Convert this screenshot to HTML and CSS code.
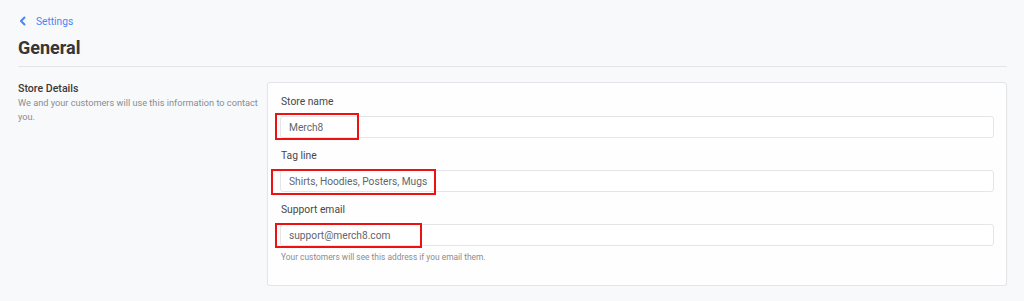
FILE: index.html
```html
<!DOCTYPE html>
<html lang="en">
  <head>
    <meta charset="UTF-8" />
    <meta name="viewport" content="width=device-width, initial-scale=1.0" />
    <title>General settings</title>
    <link rel="stylesheet" href="styles.css">
  </head>
  <body>
    <header class="page-header">
      <a class="back-link" href="#">
        <svg class="back-icon" viewBox="0 0 8 10" width="8" height="10">
          <path d="M 5.5,1.5 L 2,5 L 5.5,8.5" fill="none" stroke="currentColor" stroke-width="2" stroke-linecap="round" stroke-linejoin="round" />
        </svg>
        <span>Settings</span>
      </a>
      <h1 class="page-title">General</h1>
    </header>

    <section class="settings-section">
      <div class="section-info">
        <h2 class="section-title">Store Details</h2>
        <p class="section-desc">We and your customers will use this information to contact you.</p>
      </div>

      <div class="card">
        <div class="field">
          <label class="field-label" for="storeName">Store name</label>
          <div class="input-wrap">
            <input class="field-input" id="storeName" type="text" value="Merch8" />
            <span class="highlight highlight-name"></span>
          </div>
        </div>
        <div class="field">
          <label class="field-label" for="tagLine">Tag line</label>
          <div class="input-wrap">
            <input class="field-input" id="tagLine" type="text" value="Shirts, Hoodies, Posters, Mugs" />
            <span class="highlight highlight-tag"></span>
          </div>
        </div>
        <div class="field">
          <label class="field-label" for="supportEmail">Support email</label>
          <div class="input-wrap">
            <input class="field-input" id="supportEmail" type="email" value="support@merch8.com" />
            <span class="highlight highlight-email"></span>
          </div>
          <p class="field-help">Your customers will see this address if you email them.</p>
        </div>
      </div>
    </section>
  </body>
</html>
```

FILE: styles.css
```css
:root {
  --bg-color: #f8f9fb;
  --card-bg: #fefefe;
  --text-color: #333333;
  --muted-color: #8a8d91;
  --link-color: #4a86f0;
  --border-color: #e3e5e8;
  --highlight-color: #ee1111;
}
html,
body {
  margin: 0;
  padding: 0;
  background: var(--bg-color);
  color: var(--text-color);
  font-family: Roboto, "Liberation Sans", sans-serif;
}
body {
  padding: 14px 17px 0 18px;
}

.page-header {
  border-bottom: 1px solid var(--border-color);
  padding-bottom: 4px;
}
.back-link {
  display: flex;
  align-items: center;
  gap: 9px;
  height: 14px;
  padding-left: 1px;
  color: var(--link-color);
  font-size: 10.2px;
  text-decoration: none;
}
.back-icon {
  display: block;
}
.page-title {
  margin: 6px 0 0;
  font-size: 18px;
  line-height: 28px;
  font-weight: 700;
  color: #363636;
}

.settings-section {
  display: flex;
  gap: 9px;
  margin-top: 15px;
}
.section-info {
  width: 240px;
  flex-shrink: 0;
}
.section-title {
  margin: 0;
  font-size: 10.6px;
  line-height: 14px;
  font-weight: 500;
  color: #3a3a3a;
}
.section-desc {
  margin: 0;
  font-size: 9.2px;
  line-height: 14px;
  color: var(--muted-color);
}

.card {
  flex: 1;
  background: var(--card-bg);
  border: 1px solid var(--border-color);
  border-radius: 3px;
  box-shadow: 0 1px 2px rgba(0, 0, 0, 0.04);
  padding: 12px 12px 23px 12px;
}
.field + .field {
  margin-top: 11px;
}
.field-label {
  display: block;
  padding-left: 1px;
  font-size: 10.3px;
  line-height: 14px;
  color: #474747;
  margin-bottom: 7px;
}
.input-wrap {
  position: relative;
}
.field-input {
  display: block;
  box-sizing: border-box;
  width: 100%;
  height: 22px;
  margin: 0;
  padding: 0 8px;
  border: 1px solid var(--border-color);
  border-radius: 3px;
  background: #fff;
  font-family: Roboto, "Liberation Sans", sans-serif;
  font-size: 10.2px;
  color: #62666b;
  outline: none;
}
.field-help {
  margin: 6px 0 0;
  padding-left: 1px;
  font-size: 8.4px;
  line-height: 10px;
  color: var(--muted-color);
}

/* annotation boxes drawn over the inputs */
.highlight {
  position: absolute;
  border: 2px solid var(--highlight-color);
  pointer-events: none;
}
.highlight-name {
  left: -5px;
  top: -3px;
  width: 80px;
  height: 23px;
}
.highlight-tag {
  left: -9px;
  top: -1px;
  width: 161px;
  height: 22px;
}
.highlight-email {
  left: -5px;
  top: -1px;
  width: 143px;
  height: 21px;
}
```
